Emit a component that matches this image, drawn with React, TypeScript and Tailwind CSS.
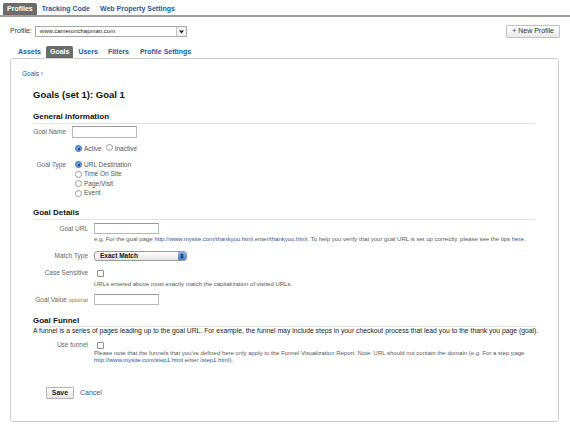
import React from 'react';

function Radio({ checked = false }: { checked?: boolean }) {
  if (checked) {
    return (
      <span className="inline-flex items-center justify-center w-[7px] h-[7px] rounded-full border border-[#3d6fb3] bg-[#6aa3e6] shrink-0">
        <span className="w-[2px] h-[2px] rounded-full bg-[#10233f]"></span>
      </span>
    );
  }
  return <span className="inline-block w-[7px] h-[7px] rounded-full border border-[#9a9a9a] bg-white shrink-0"></span>;
}

function Checkbox() {
  return <span className="inline-block w-[7px] h-[7px] rounded-[1px] border border-[#8e8e8e] bg-white"></span>;
}

function TextInput({ width }: { width: string }) {
  return <div className={`h-full ${width} border border-[#b8b8b8] border-t-[#999] bg-white`}></div>;
}

export default function App() {
  return (
    <div className="w-[570px] h-[439px] bg-white overflow-hidden font-['Liberation_Sans',Arial,sans-serif] text-[#333]">
      {/* top tabs */}
      <div className="h-[17px] flex items-end pl-[3px] border-b-2 border-[#9c9c9c]">
        <div className="h-[12px] px-[4px] flex items-center bg-[#6b6b6b] text-white text-[7px] font-bold rounded-t-[2px]">
          Profiles
        </div>
        <div className="h-[12px] flex items-center ml-[5px] text-[7px] font-bold text-[#2159a6]">Tracking Code</div>
        <div className="h-[12px] flex items-center ml-[10px] text-[7px] font-bold text-[#2159a6]">Web Property Settings</div>
      </div>

      {/* profile row */}
      <div className="mt-[8px] h-[13px] flex items-center pl-[10px] pr-[10px]">
        <span className="text-[7px] text-[#333]">Profile:</span>
        <div className="ml-[3px] w-[152px] h-[11px] border border-[#a8a8a8] bg-white flex items-center">
          <span className="flex-1 pl-[4px] text-[6px] text-[#222]">www.cameronchapman.com</span>
          <span className="w-[10px] h-full border-l border-[#c4c4c4] bg-[#f2f2f2] flex items-center justify-center">
            <svg width="5" height="4" viewBox="0 0 5 4"><path d="M0 0.5 L5 0.5 L2.5 3.5 Z" fill="#222" /></svg>
          </span>
        </div>
        <div className="ml-auto h-[13px] px-[5px] flex items-center border border-[#c3c3c3] rounded-[1px] bg-gradient-to-b from-white to-[#e9e9e9] text-[7px] text-[#333]">
          + New Profile
        </div>
      </div>

      {/* sub tabs */}
      <div className="mt-[8px] h-[12px] flex items-end pl-[18px] text-[7px] font-bold text-[#2159a6]">
        <div className="h-[12px] flex items-center">Assets</div>
        <div className="h-[12px] ml-[5px] px-[4px] flex items-center bg-[#6b6b6b] text-white rounded-t-[2px]">Goals</div>
        <div className="h-[12px] ml-[5px] flex items-center">Users</div>
        <div className="h-[12px] ml-[10px] flex items-center">Filters</div>
        <div className="h-[12px] ml-[11px] flex items-center">Profile Settings</div>
      </div>

      {/* panel */}
      <div className="ml-[10px] w-[549px] h-[364px] border border-[#cfcfcf] rounded-[3px] bg-white">
        <div className="pt-[10px] pl-[11px] h-[20px] flex items-end text-[6.5px] text-[#2159a6]">
          <span className="h-[10px] flex items-center">Goals ›</span>
        </div>

        <div className="pl-[22px] pr-[23px]">
          <div className="mt-[9px] h-[14px] flex items-center text-[9.5px] font-bold text-[#111]">Goals (set 1): Goal 1</div>

          {/* General Information */}
          <div className="mt-[9px] h-[13px] flex items-center border-b border-[#e2e2e2] text-[8px] font-bold text-[#111]">
            General Information
          </div>
          <div className="mt-[2px] h-[12px] flex items-center">
            <span className="w-[33px] text-right text-[6.5px] text-[#666]">Goal Name</span>
            <div className="ml-[6px] h-[12px]"><TextInput width="w-[65px]" /></div>
          </div>
          <div className="mt-[6px] h-[9px] flex items-center pl-[42px] text-[6.5px] text-[#555]">
            <Radio checked />
            <span className="ml-[2px]">Active</span>
            <span className="ml-[4px]"><Radio /></span>
            <span className="ml-[2px]">Inactive</span>
          </div>
          <div className="mt-[7px] flex">
            <span className="w-[33px] h-[9.5px] flex items-center justify-end text-[6.5px] text-[#666]">Goal Type</span>
            <div className="ml-[9px] flex flex-col text-[6.5px] text-[#555]">
              {['URL Destination', 'Time On Site', 'Page/Visit', 'Event'].map((t, i) => (
                <div key={t} className="h-[9.5px] flex items-center">
                  <Radio checked={i === 0} />
                  <span className="ml-[2px]">{t}</span>
                </div>
              ))}
            </div>
          </div>

          {/* Goal Details */}
          <div className="mt-[9px] h-[13px] flex items-center border-b border-[#e2e2e2] text-[8px] font-bold text-[#111]">
            Goal Details
          </div>
          <div className="mt-[3px] h-[11px] flex items-center">
            <span className="w-[55px] text-right text-[6.5px] text-[#666]">Goal URL</span>
            <div className="ml-[6px] h-[11px]"><TextInput width="w-[65px]" /></div>
          </div>
          <div className="mt-[1px] h-[8px] flex items-center pl-[61px] text-[6px] text-[#555] whitespace-nowrap">
            e.g. For the goal page&nbsp;<span className="text-[#1f56a5]">http://www.mysite.com/thankyou.html</span>&nbsp;enter<span className="text-[#1f56a5]">/thankyou.html</span>. To help you verify that your goal URL is set up correctly, please see the tips&nbsp;<span className="text-[#1f56a5]">here</span>.
          </div>
          <div className="mt-[8px] h-[10px] flex items-center">
            <span className="w-[55px] text-right text-[6.5px] text-[#666]">Match Type</span>
            <div className="ml-[6px] w-[93px] h-[10px] rounded-[3px] border border-[#9a9a9a] bg-gradient-to-b from-white to-[#e6e6e6] flex items-center overflow-hidden">
              <span className="flex-1 pl-[5px] text-[6.5px] font-bold text-[#111]">Exact Match</span>
              <span className="w-[8px] h-full bg-gradient-to-b from-[#8bb8ee] to-[#3d7fd6] flex flex-col items-center justify-center">
                <svg width="4" height="6" viewBox="0 0 4 6"><path d="M0 2.5 L2 0.5 L4 2.5 Z M0 3.5 L2 5.5 L4 3.5 Z" fill="#0b1d3a" /></svg>
              </span>
            </div>
          </div>
          <div className="mt-[8px] h-[8px] flex items-center">
            <span className="w-[55px] text-right text-[6.5px] text-[#666]">Case Sensitive</span>
            <span className="ml-[9px] flex items-center"><Checkbox /></span>
          </div>
          <div className="mt-[3px] h-[8px] flex items-center pl-[61px] text-[6px] text-[#555]">
            URLs entered above must exactly match the capitalization of visited URLs.
          </div>
          <div className="mt-[6px] h-[11px] flex items-center">
            <span className="w-[55px] text-right text-[6.5px] text-[#666] whitespace-nowrap">
              Goal Value <span className="text-[5.5px] text-[#a5761e]">optional</span>
            </span>
            <div className="ml-[6px] h-[11px]"><TextInput width="w-[65px]" /></div>
          </div>

          {/* Goal Funnel */}
          <div className="mt-[10px] h-[12px] flex items-center border-b border-[#e2e2e2] text-[8px] font-bold text-[#111]">
            Goal Funnel
          </div>
          <div className="mt-[0px] h-[9px] flex items-center text-[6.8px] text-[#222] whitespace-nowrap">
            A funnel is a series of pages leading up to the goal URL. For example, the funnel may include steps in your checkout process that lead you to the thank you page (goal).
          </div>
          <div className="mt-[5px] h-[8px] flex items-center">
            <span className="w-[55px] text-right text-[6.5px] text-[#666]">Use funnel</span>
            <span className="ml-[9px] flex items-center"><Checkbox /></span>
          </div>
          <div className="mt-[1px] pl-[61px] text-[6px] leading-[7px] text-[#555] whitespace-nowrap">
            <div>Please note that the funnels that you've defined here only apply to the Funnel Visualization Report. Note: URL should not contain the domain (e.g. For a step page</div>
            <div><span className="text-[#1f56a5]">http://www.mysite.com/step1.html</span> enter <span className="text-[#1f56a5]">/step1.html</span>).</div>
          </div>

          <div className="mt-[23px] h-[12px] flex items-center pl-[13px]">
            <div className="h-[12px] w-[28px] flex items-center justify-center border border-[#b5b5b5] rounded-[1px] bg-gradient-to-b from-white to-[#e3e3e3] text-[7px] font-bold text-[#222]">
              Save
            </div>
            <span className="ml-[6px] text-[7px] text-[#2159a6]">Cancel</span>
          </div>
        </div>
      </div>
    </div>
  );
}
